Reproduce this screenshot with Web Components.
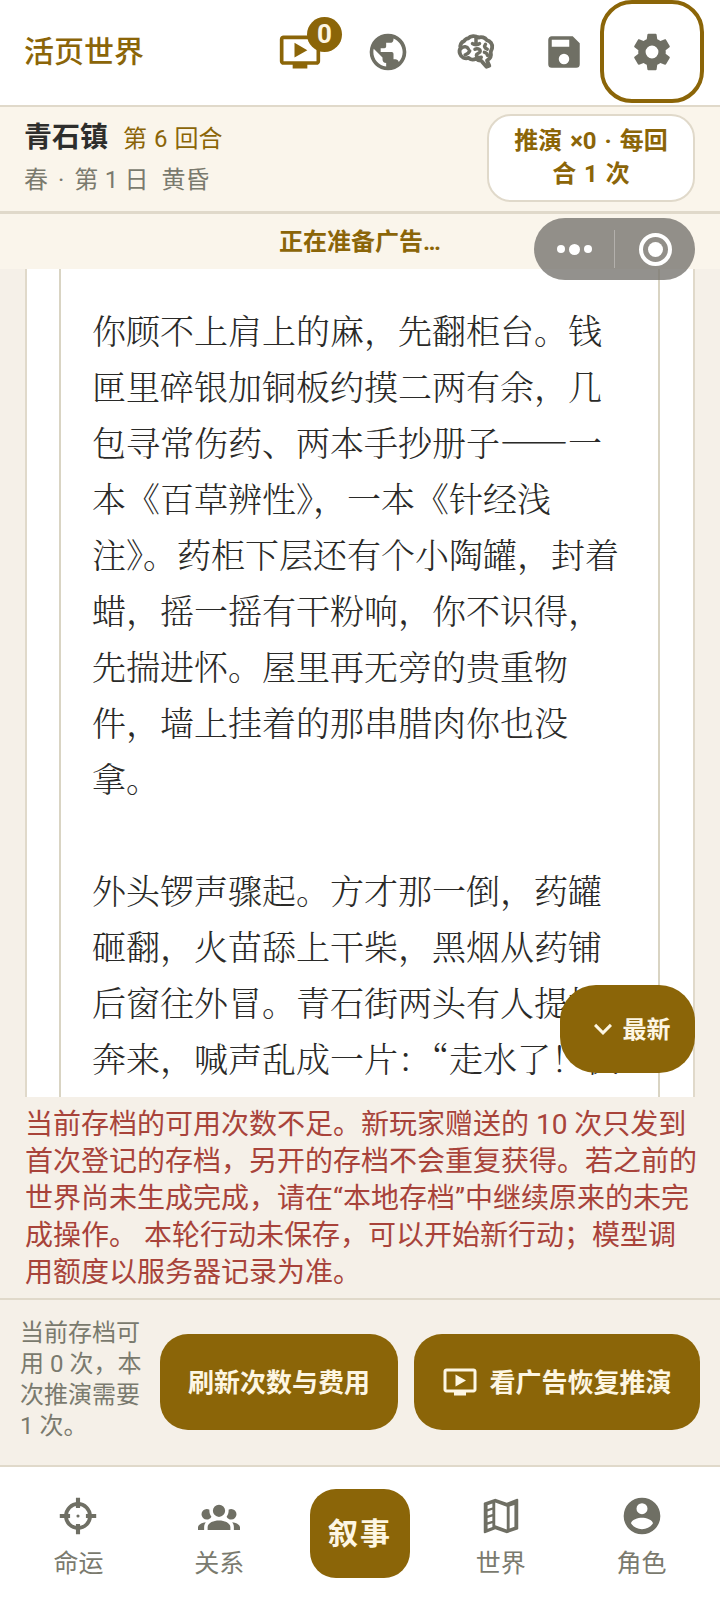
<!DOCTYPE html>
<html lang="zh">
<head>
<meta charset="utf-8">
<title>活页世界</title>
<style>
  html, body { margin: 0; padding: 0; background: #f5f0e8; }
  body {
    width: 720px;
    height: 1610px;
    overflow: hidden;
    display: flex;
    flex-direction: column;
    position: relative;
    font-family: Roboto, "Noto Sans CJK SC", sans-serif;
    --brand: #8b6508;
    --muted: #6f6f64;
    --line: #e0d9ca;
  }
</style>
</head>
<body>
  <app-header></app-header>
  <status-bar></status-bar>
  <ad-strip></ad-strip>
  <story-view>
    <p>
      <span>你顾不上肩上的麻，先翻柜台。钱</span>
      <span>匣里碎银加铜板约摸二两有余，几</span>
      <span>包寻常伤药、两本手抄册子——一</span>
      <span>本《百草辨性》，一本《针经浅</span>
      <span>注》。药柜下层还有个小陶罐，封着</span>
      <span>蜡，摇一摇有干粉响，你不识得，</span>
      <span>先揣进怀。屋里再无旁的贵重物</span>
      <span>件，墙上挂着的那串腊肉你也没</span>
      <span>拿。</span>
    </p>
    <p>
      <span>外头锣声骤起。方才那一倒，药罐</span>
      <span>砸翻，火苗舔上干柴，黑烟从药铺</span>
      <span>后窗往外冒。青石街两头有人提桶</span>
      <span>奔来，喊声乱成一片：“走水了！快</span>
    </p>
  </story-view>
  <error-note>当前存档的可用次数不足。新玩家赠送的 10 次只发到首次登记的存档，另开的存档不会重复获得。若之前的世界尚未生成完成，请在“本地存档”中继续原来的未完成操作。 本轮行动未保存，可以开始新行动；模型调用额度以服务器记录为准。</error-note>
  <action-row></action-row>
  <tab-bar></tab-bar>
  <wx-capsule></wx-capsule>

<script>
const ICONS = {
  video: '<path d="M21 3H3c-1.11 0-2 .89-2 2v12c0 1.1.89 2 2 2h5v2h8v-2h5c1.1 0 1.99-.9 1.99-2L23 5c0-1.11-.9-2-2-2zm0 14H3V5h18v12zM16 11l-7 4V7z"/>',
  earth: '<path d="M17.9,17.39C17.64,16.59 16.89,16 16,16H15V13A1,1 0 0,0 14,12H8V10H10A1,1 0 0,0 11,9V7H13A2,2 0 0,0 15,5V4.59C17.93,5.77 20,8.64 20,12C20,14.08 19.2,15.97 17.9,17.39M11,19.93C7.05,19.44 4,16.08 4,12C4,11.38 4.08,10.78 4.21,10.21L9,15V16A2,2 0 0,0 11,18M12,2A10,10 0 0,0 2,12A10,10 0 0,0 12,22A10,10 0 0,0 22,12A10,10 0 0,0 12,2Z"/>',
  brain: '<path fill="none" stroke="currentColor" stroke-width="2.2" stroke-linecap="round" stroke-linejoin="round" d="M7.5 4.2C9 2.6 11.6 2.5 13.4 3.8 15 3.1 17.2 3.7 18.1 5.2 20.2 5.6 21.6 7.6 21.2 9.6 21 10.7 20.4 11.4 20.4 12.3 20.9 14.4 19.9 16 18.3 16.8L19.6 19.8 18 20.4 15.1 17.1C13.9 17.1 12.8 16.6 12 15.8 10.6 16.6 9 16.4 7.8 15.4 5.5 16 3.4 15 2.8 12.9 2.4 11.7 2.6 10.6 3.2 9.8 2.6 8 3.6 6.3 5.2 5.8 5.7 4.9 6.5 4.3 7.5 4.2Z"/><path fill="none" stroke="currentColor" stroke-width="2" stroke-linecap="round" d="M3.6 9.8C5 8.6 7 8.8 7.6 10.2M5.8 13.6C7 13.2 8 12.4 8.4 11.4M12 3.8V7.2M10 7.2C11 8 13 8 14 7.2M11.4 10.4C12.6 9.8 14.4 10.2 14.4 11.6 14.4 12.8 12.2 12.6 12.2 13.8 12.2 15 13.8 15.4 15 15M17.4 7.6C16.4 8.8 17.2 10 18.4 10.4M16.8 12.2C17.8 12.4 18.4 13 18.6 14"/>',
  save: '<path d="M15,9H5V5H15M12,19A3,3 0 0,1 9,16A3,3 0 0,1 12,13A3,3 0 0,1 15,16A3,3 0 0,1 12,19M17,3H5C3.89,3 3,3.9 3,5V19A2,2 0 0,0 5,21H19A2,2 0 0,0 21,19V7L17,3Z"/>',
  cog: '<path d="M12,15.5A3.5,3.5 0 0,1 8.5,12A3.5,3.5 0 0,1 12,8.5A3.5,3.5 0 0,1 15.5,12A3.5,3.5 0 0,1 12,15.5M19.43,12.97C19.47,12.65 19.5,12.33 19.5,12C19.5,11.67 19.47,11.34 19.43,11L21.54,9.37C21.73,9.22 21.78,8.95 21.66,8.73L19.66,5.27C19.54,5.05 19.27,4.96 19.05,5.05L16.56,6.05C16.04,5.66 15.5,5.32 14.87,5.07L14.5,2.42C14.46,2.18 14.25,2 14,2H10C9.75,2 9.54,2.18 9.5,2.42L9.13,5.07C8.5,5.32 7.96,5.66 7.44,6.05L4.95,5.05C4.73,4.96 4.46,5.05 4.34,5.27L2.34,8.73C2.21,8.95 2.27,9.22 2.46,9.37L4.57,11C4.53,11.34 4.5,11.67 4.5,12C4.5,12.33 4.53,12.65 4.57,12.97L2.46,14.63C2.27,14.78 2.21,15.05 2.34,15.27L4.34,18.73C4.46,18.95 4.73,19.03 4.95,18.95L7.44,17.94C7.96,18.34 8.5,18.68 9.13,18.93L9.5,21.58C9.54,21.82 9.75,22 10,22H14C14.25,22 14.46,21.82 14.5,21.58L14.87,18.93C15.5,18.67 16.04,18.34 16.56,17.94L19.05,18.95C19.27,19.03 19.54,18.95 19.66,18.73L21.66,15.27C21.78,15.05 21.73,14.78 21.54,14.63L19.43,12.97Z"/>',
  target: '<circle cx="12" cy="12" r="7.6" fill="none" stroke="currentColor" stroke-width="2.4"/><path fill="none" stroke="currentColor" stroke-width="2.6" d="M12 .5V7M12 17V23.5M.5 12H7M17 12H23.5"/><circle cx="12" cy="12" r="1"/>',
  group: '<path d="M12,5.5A3.5,3.5 0 0,1 15.5,9A3.5,3.5 0 0,1 12,12.5A3.5,3.5 0 0,1 8.5,9A3.5,3.5 0 0,1 12,5.5M5,8C5.56,8 6.08,8.15 6.53,8.42C6.38,9.85 6.8,11.27 7.66,12.38C7.16,13.34 6.16,14 5,14A3,3 0 0,1 2,11A3,3 0 0,1 5,8M19,8A3,3 0 0,1 22,11A3,3 0 0,1 19,14C17.84,14 16.84,13.34 16.34,12.38C17.2,11.27 17.62,9.85 17.47,8.42C17.92,8.15 18.44,8 19,8M5.5,18.25C5.5,16.18 8.41,14.5 12,14.5C15.59,14.5 18.5,16.18 18.5,18.25V20H5.5V18.25M0,20V18.5C0,17.11 1.89,15.94 4.45,15.6C3.86,16.28 3.5,17.22 3.5,18.25V20H0M24,20H20.5V18.25C20.5,17.22 20.14,16.28 19.55,15.6C22.11,15.94 24,17.11 24,18.5V20Z"/>',
  map: '<path fill-rule="evenodd" d="M15,19L9,16.89V5L15,7.11M20.5,3C20.44,3 20.39,3 20.34,3L15,5.1L9,3L3.36,4.9C3.15,4.97 3,5.15 3,5.38V20.5A0.5,0.5 0 0,0 3.5,21C3.55,21 3.61,21 3.66,20.97L9,18.9L15,21L20.64,19.1C20.85,19 21,18.85 21,18.62V3.5A0.5,0.5 0 0,0 20.5,3M5,6.4L7.5,5.5V7.5L5,8.3M5,9.6L7.5,8.8V11L5,11.8M5,13.1L7.5,12.3V14.5L5,15.3M5,16.6L7.5,15.8V17.7L5,18.6M16.5,7L19,6.2V17.6L16.5,18.5Z"/>',
  account: '<path d="M12,19.2C9.5,19.2 7.29,17.92 6,16C6.03,14 10,12.9 12,12.9C14,12.9 17.97,14 18,16C16.71,17.92 14.5,19.2 12,19.2M12,5A3,3 0 0,1 15,8A3,3 0 0,1 12,11A3,3 0 0,1 9,8A3,3 0 0,1 12,5M12,2A10,10 0 0,0 2,12A10,10 0 0,0 12,22A10,10 0 0,0 22,12A10,10 0 0,0 12,2Z"/>',
  chevron: '<path d="M7.41,8.58L12,13.17L16.59,8.58L18,10L12,16L6,10L7.41,8.58Z"/>'
};

function svgIcon(name, size) {
  return `<svg width="${size}" height="${size}" viewBox="0 0 24 24" fill="currentColor" aria-hidden="true">${ICONS[name]}</svg>`;
}

class AppHeader extends HTMLElement {
  constructor() {
    super();
    this.attachShadow({ mode: 'open' });
    this.shadowRoot.innerHTML = `
      <style>
        :host { display: flex; height: 105px; background: #fff; padding: 0 16px 0 24px; flex: none; box-sizing: border-box; }
        .title { font-size: 30px; font-weight: 500; color: var(--brand); flex: 1; align-self: center; padding-bottom: 7px; }
        nav { display: flex; align-items: flex-start; }
        .btn { width: 88px; height: 103px; display: flex; align-items: center; justify-content: center; color: var(--muted); position: relative; box-sizing: border-box; }
        .on { width: 104px; border: 4px solid var(--brand); border-radius: 32px; margin-left: -8px; }
        .ad { color: var(--brand); }
        .badge { position: absolute; top: 17px; left: 51px; width: 35px; height: 35px; border-radius: 50%; background: var(--brand); color: #fdf6e3; font-size: 26px; font-weight: 700; line-height: 35px; text-align: center; }
      </style>
      <div class="title">活页世界</div>
      <nav>
        <div class="btn ad">${svgIcon('video', 44)}<span class="badge">0</span></div>
        <div class="btn">${svgIcon('earth', 44)}</div>
        <div class="btn">${svgIcon('brain', 42)}</div>
        <div class="btn">${svgIcon('save', 42)}</div>
        <div class="btn on">${svgIcon('cog', 44)}</div>
      </nav>`;
  }
}

class StatusBar extends HTMLElement {
  constructor() {
    super();
    this.attachShadow({ mode: 'open' });
    this.shadowRoot.innerHTML = `
      <style>
        :host { display: flex; align-items: center; justify-content: space-between; flex: none; box-sizing: border-box; height: 109px; padding: 0 25px 0 24px; background: #faf5eb; border-top: 2px solid var(--line); border-bottom: 3px solid var(--line); }
        .place { display: flex; align-items: baseline; gap: 15px; line-height: 41px; }
        b { font-size: 28px; font-weight: 700; color: #2e2e2c; }
        .round { font-size: 24px; color: var(--brand); word-spacing: 1px; }
        .time { font-size: 24px; line-height: 41px; color: #7a7a6e; word-spacing: .5px; }
        .dot { margin: 0 3.5px; }
        .pill { width: 208px; box-sizing: border-box; height: 88px; margin-top: -2px; background: #fff; border: 2px solid var(--line); border-radius: 24px; font-size: 24px; font-weight: 700; line-height: 33px; color: var(--brand); text-align: center; padding: 9px 18px; word-spacing: 2px; }
      </style>
      <div>
        <div class="place"><b>青石镇</b><span class="round">第 6 回合</span></div>
        <div class="time">春 <span class="dot">·</span> 第 1 日&nbsp;&nbsp;黄昏</div>
      </div>
      <div class="pill">推演 ×0 · 每回合 1 次</div>`;
  }
}

class AdStrip extends HTMLElement {
  constructor() {
    super();
    this.attachShadow({ mode: 'open' });
    this.shadowRoot.innerHTML = `
      <style>
        :host { display: flex; align-items: center; justify-content: center; flex: none; height: 55px; background: #faf5eb; color: var(--brand); font-size: 24px; font-weight: 700; padding-bottom: 5px; box-sizing: border-box; }
      </style>
      正在准备广告…`;
  }
}

class StoryView extends HTMLElement {
  constructor() {
    super();
    this.attachShadow({ mode: 'open' });
    this.shadowRoot.innerHTML = `
      <style>
        :host { display: block; flex: none; height: 828px; padding: 0 25px; overflow: hidden; position: relative; box-sizing: border-box; }
        .card { height: 100%; box-sizing: border-box; background: #fff; border-left: 2px solid var(--line); border-right: 2px solid var(--line); padding: 0 33px 0 32px; }
        .page { height: 100%; box-sizing: border-box; border-left: 2px solid #d9d4c3; border-right: 2px solid #d9d4c3; padding: 33px 0 0 31px; overflow: hidden; }
        ::slotted(p) { margin: 0 0 56px; font: 300 34px/56px "Noto Serif CJK SC", "Liberation Serif", "Noto Sans CJK SC", serif; color: #2a2a28; }
        .latest { position: absolute; left: 560px; top: 716px; width: 135px; height: 88px; border-radius: 36px; background: var(--brand); color: #fdf6e3; font-size: 24px; font-weight: 700; display: flex; align-items: center; justify-content: center; gap: 2px; }
        .latest span { padding-bottom: 3px; }
      </style>
      <div class="card"><div class="page"><slot></slot></div></div>
      <div class="latest">${svgIcon('chevron', 36)}<span>最新</span></div>`;
  }
  connectedCallback() {
    this.querySelectorAll('span').forEach(s => { s.style.display = 'block'; s.style.whiteSpace = 'nowrap'; });
  }
}

class ErrorNote extends HTMLElement {
  constructor() {
    super();
    this.attachShadow({ mode: 'open' });
    this.shadowRoot.innerHTML = `
      <style>
        :host { display: block; flex: none; height: 201px; box-sizing: border-box; padding: 9px 20px 0 25px; color: #a8433a; font-size: 28px; line-height: 37px; }
      </style>
      <slot></slot>`;
  }
}

class ActionRow extends HTMLElement {
  constructor() {
    super();
    this.attachShadow({ mode: 'open' });
    this.shadowRoot.innerHTML = `
      <style>
        :host { display: flex; align-items: center; flex: none; height: 169px; box-sizing: border-box; padding: 0 20px 2px 20px; border-top: 2px solid var(--line); border-bottom: 2px solid var(--line); gap: 16px; }
        .note { width: 124px; flex: none; font-size: 24px; line-height: 31px; color: #7a7a6e; padding-bottom: 4px; }
        .btn { height: 96px; border-radius: 28px; background: var(--brand); color: #fdf6e3; font-size: 26px; font-weight: 700; display: flex; align-items: center; justify-content: center; gap: 11px; box-sizing: border-box; white-space: nowrap; padding-bottom: 3px; }
        .a { width: 238px; }
        .b { width: 286px; }
        svg { margin-top: 3px; }
      </style>
      <div class="note">当前存档可用 0 次，本次推演需要 1 次。</div>
      <div class="btn a">刷新次数与费用</div>
      <div class="btn b">${svgIcon('video', 36)}看广告恢复推演</div>`;
  }
}

class TabBar extends HTMLElement {
  constructor() {
    super();
    this.attachShadow({ mode: 'open' });
    const item = (icon, size, label) => `<div class="tab"><div class="ic">${svgIcon(icon, size)}</div><span>${label}</span></div>`;
    this.shadowRoot.innerHTML = `
      <style>
        :host { display: flex; flex: 1; background: #fff; padding: 22px 8px 0; box-sizing: border-box; align-items: flex-start; }
        .tab { flex: 1; display: flex; flex-direction: column; align-items: center; gap: 8px; color: var(--muted); font-size: 25px; line-height: 36px; padding-top: 5px; }
        .ic { height: 44px; display: flex; align-items: center; }
        .tab span { color: #7a7a6e; }
        .cur { flex: 1; display: flex; justify-content: center; }
        .cur div { width: 100px; height: 89px; border-radius: 26px; background: var(--brand); color: #fdf6e3; font-size: 30px; font-weight: 700; letter-spacing: 2px; display: flex; align-items: center; justify-content: center; padding-bottom: 6px; box-sizing: border-box; }
      </style>
      ${item('target', 38, '命运')}
      ${item('group', 42, '关系')}
      <div class="cur"><div>叙事</div></div>
      ${item('map', 46, '世界')}
      ${item('account', 44, '角色')}`;
  }
}

class WxCapsule extends HTMLElement {
  constructor() {
    super();
    this.attachShadow({ mode: 'open' });
    this.shadowRoot.innerHTML = `
      <style>
        :host { position: absolute; left: 534px; top: 218px; width: 161px; height: 62px; border-radius: 31px; background: rgba(120,118,112,.8); display: flex; align-items: center; }
        .more { width: 80px; display: flex; justify-content: center; align-items: center; gap: 4px; }
        .more i { width: 8px; height: 8px; border-radius: 50%; background: #fff; }
        .more i:nth-child(2) { width: 11px; height: 11px; }
        .sep { width: 1px; height: 38px; background: rgba(255,255,255,.3); }
        .rec { flex: 1; display: flex; justify-content: center; }
        .ring { width: 33px; height: 33px; border-radius: 50%; border: 4px solid #fff; box-sizing: border-box; display: flex; align-items: center; justify-content: center; }
        .ring::after { content: ""; width: 15px; height: 15px; border-radius: 50%; background: #fff; }
      </style>
      <div class="more"><i></i><i></i><i></i></div>
      <div class="sep"></div>
      <div class="rec"><div class="ring"></div></div>`;
  }
}

customElements.define('app-header', AppHeader);
customElements.define('status-bar', StatusBar);
customElements.define('ad-strip', AdStrip);
customElements.define('story-view', StoryView);
customElements.define('error-note', ErrorNote);
customElements.define('action-row', ActionRow);
customElements.define('tab-bar', TabBar);
customElements.define('wx-capsule', WxCapsule);
</script>
</body>
</html>
